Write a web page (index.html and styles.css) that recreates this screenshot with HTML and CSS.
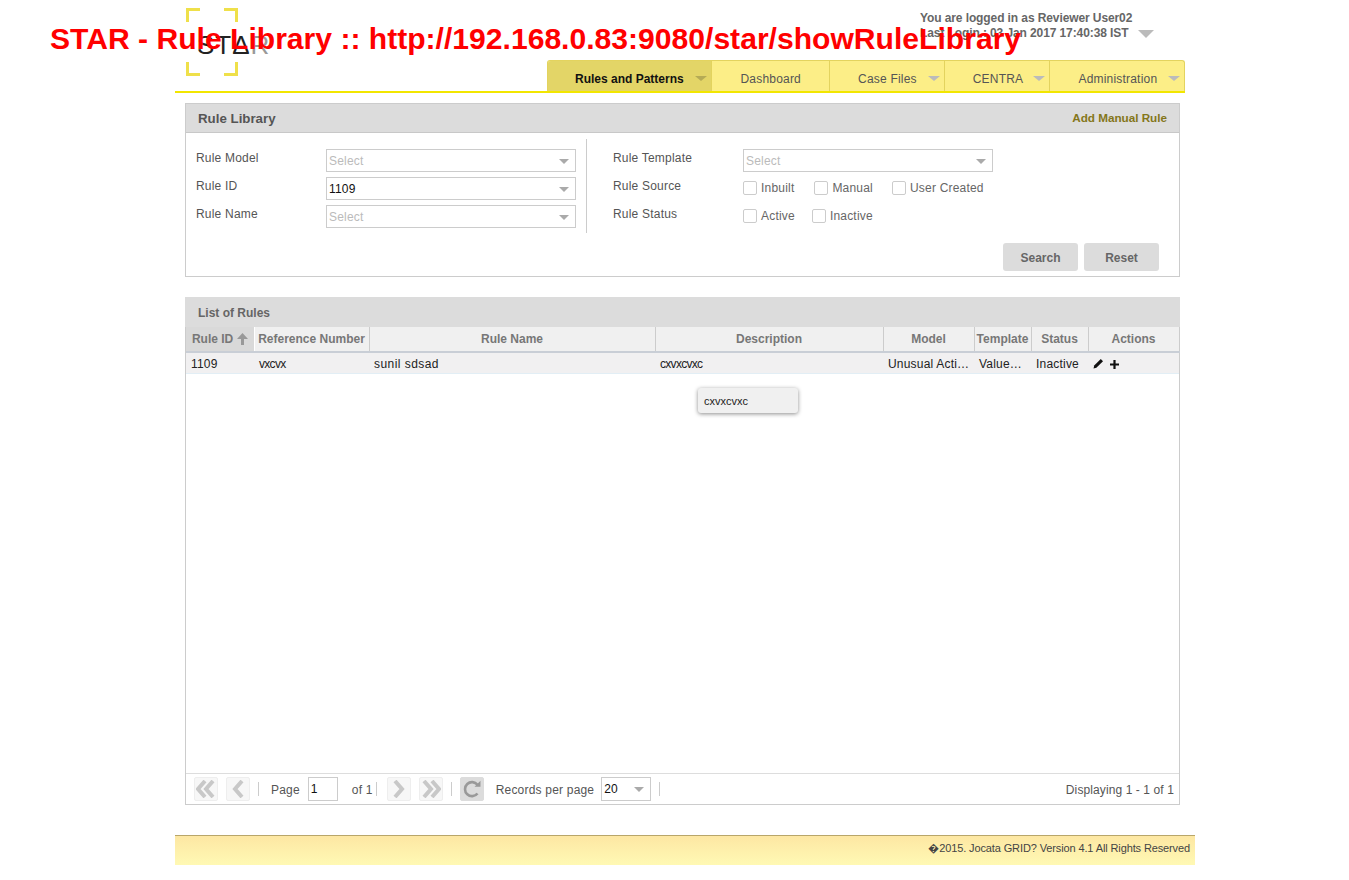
FILE: index.html
```html
<!DOCTYPE html>
<html lang="en">
<head>
    <meta charset="UTF-8">
    <title>STAR - Rule Library</title>
    <link rel="stylesheet" href="styles.css">
</head>
<body>
    <div class="page-title">STAR - Rule Library :: http://192.168.0.83:9080/star/showRuleLibrary</div>

    <div class="wrapper">
        <div class="header">
            <div class="logo">
                <span class="corner tl"></span><span class="corner tr"></span>
                <span class="corner bl"></span><span class="corner br"></span>
                <span class="logo-text">STΔ<span class="logo-r">R</span></span>
            </div>
            <div class="user-info">
                <div>You are logged in as Reviewer User02</div>
                <div>Last Login : 03 Jan 2017 17:40:38 IST <span class="user-arrow"></span></div>
            </div>
            <ul class="nav">
                <li class="nav-item active" style="width:165px">Rules and Patterns<span class="nav-arrow"></span></li>
                <li class="nav-item" style="width:118px">Dashboard</li>
                <li class="nav-item" style="width:115px">Case Files<span class="nav-arrow"></span></li>
                <li class="nav-item" style="width:106px">CENTRA<span class="nav-arrow"></span></li>
                <li class="nav-item" style="width:134px">Administration<span class="nav-arrow"></span></li>
            </ul>
        </div>

        <div class="panel search-panel">
            <div class="panel-head">
                <span class="panel-title">Rule Library</span>
                <a class="add-link">Add Manual Rule</a>
            </div>
            <div class="search-body">
                <div class="search-left">
                    <div class="form-row">
                        <label>Rule Model</label>
                        <div class="select"><span class="placeholder">Select</span><span class="select-arrow"></span></div>
                    </div>
                    <div class="form-row">
                        <label>Rule ID</label>
                        <div class="select"><span>1109</span><span class="select-arrow"></span></div>
                    </div>
                    <div class="form-row">
                        <label>Rule Name</label>
                        <div class="select"><span class="placeholder">Select</span><span class="select-arrow"></span></div>
                    </div>
                </div>
                <div class="search-right">
                    <div class="form-row">
                        <label>Rule Template</label>
                        <div class="select"><span class="placeholder">Select</span><span class="select-arrow"></span></div>
                    </div>
                    <div class="form-row">
                        <label>Rule Source</label>
                        <div class="checks">
                            <span class="check check-a"><i></i>Inbuilt</span>
                            <span class="check check-b"><i></i>Manual</span>
                            <span class="check"><i></i>User Created</span>
                        </div>
                    </div>
                    <div class="form-row">
                        <label>Rule Status</label>
                        <div class="checks">
                            <span class="check check-c"><i></i>Active</span>
                            <span class="check"><i></i>Inactive</span>
                        </div>
                    </div>
                </div>
            </div>
            <div class="search-actions">
                <button>Search</button>
                <button>Reset</button>
            </div>
        </div>

        <div class="panel list-panel">
            <div class="list-head">List of Rules</div>
            <table class="grid">
                <colgroup>
                    <col style="width:68px"><col style="width:115px"><col style="width:286px"><col style="width:228px">
                    <col style="width:91px"><col style="width:57px"><col style="width:57px"><col style="width:91px">
                </colgroup>
                <thead>
                    <tr>
                        <th class="sorted">Rule ID
                            <svg class="sort-icon" width="11" height="12" viewBox="0 0 11 12"><path d="M5.5 0 L11 6 H7 V12 H4 V6 H0 Z" fill="#999"/></svg>
                        </th>
                        <th>Reference Number</th>
                        <th>Rule Name</th>
                        <th>Description</th>
                        <th>Model</th>
                        <th>Template</th>
                        <th>Status</th>
                        <th>Actions</th>
                    </tr>
                </thead>
                <tbody>
                    <tr>
                        <td>1109</td>
                        <td class="tight">vxcvx</td>
                        <td class="wide">sunil sdsad</td>
                        <td class="tight">cxvxcvxc</td>
                        <td>Unusual Activity</td>
                        <td>Values Rule</td>
                        <td>Inactive</td>
                        <td class="actions">
                            <svg width="11" height="11" viewBox="0 0 11 11"><path d="M0.5 10.5 L1.2 7.6 L7.8 1 L10 3.2 L3.4 9.8 Z" fill="#111"/></svg>
                            <svg width="9" height="9" viewBox="0 0 9 9"><path d="M3.4 0 H5.6 V3.4 H9 V5.6 H5.6 V9 H3.4 V5.6 H0 V3.4 H3.4 Z" fill="#111"/></svg>
                        </td>
                    </tr>
                </tbody>
            </table>
            <div class="grid-space">
                <div class="tooltip">cxvxcvxc</div>
            </div>
            <div class="pager">
                <span class="pg-btn"><svg width="20" height="18" viewBox="0 0 20 18"><path d="M9 1 L2 9 L9 17 M17 1 L10 9 L17 17" fill="none" stroke="#c8c8c8" stroke-width="4"/></svg></span>
                <span class="pg-btn"><svg width="12" height="18" viewBox="0 0 12 18"><path d="M10 1 L3 9 L10 17" fill="none" stroke="#c8c8c8" stroke-width="4"/></svg></span>
                <span class="pg-sep"></span>
                <span class="pg-text">Page</span>
                <span class="pg-input">1</span>
                <span class="pg-text pg-of">of 1</span>
                <span class="pg-sep sep-tight"></span>
                <span class="pg-btn"><svg width="12" height="18" viewBox="0 0 12 18"><path d="M2 1 L9 9 L2 17" fill="none" stroke="#c8c8c8" stroke-width="4"/></svg></span>
                <span class="pg-btn"><svg width="20" height="18" viewBox="0 0 20 18"><path d="M3 1 L10 9 L3 17 M11 1 L18 9 L11 17" fill="none" stroke="#c8c8c8" stroke-width="4"/></svg></span>
                <span class="pg-sep sep-refresh"></span>
                <span class="pg-btn refresh"><svg width="18" height="18" viewBox="0 0 18 18"><path d="M14.5 13.5 A7 7 0 1 1 14.5 4.8" fill="none" stroke="#999" stroke-width="2.6"/><path d="M11.5 6.8 H17.5 V0.8 Z" fill="#999"/></svg></span>
                <span class="pg-text pg-records">Records per page</span>
                <div class="select pg-select"><span>20</span><span class="select-arrow"></span></div>
                <span class="pg-sep"></span>
                <span class="pg-display">Displaying 1 - 1 of 1</span>
            </div>
        </div>
    </div>

    <div class="footer">�2015. Jocata GRID? Version 4.1 All Rights Reserved</div>
</body>
</html>
```

FILE: styles.css
```css
* {
    box-sizing: border-box;
}
body {
    margin: 0;
    padding-left: 175px;
    font-family: "Liberation Sans", Arial, sans-serif;
    font-size: 12px;
    letter-spacing: 0.2px;
    color: #444;
    background-color: #fff;
}
.page-title {
    position: absolute;
    left: 50px;
    top: 20px;
    font-size: 30.1px;
    line-height: 37px;
    font-weight: bold;
    letter-spacing: 0;
    color: #f00;
    white-space: nowrap;
    z-index: 10;
}
.wrapper {
    width: 1010px;
}

/* Header */
.header {
    position: relative;
    height: 93px;
    border-bottom: 2px solid #f2e600;
    display: flex;
    align-items: flex-end;
    justify-content: flex-end;
}
.logo {
    position: absolute;
    left: 11px;
    top: 8px;
    width: 52px;
    height: 68px;
}
.corner {
    position: absolute;
    width: 14px;
    height: 14px;
    border: 0 solid #efe04a;
}
.tl { left: 0; top: 0; border-width: 3px 0 0 3px; }
.tr { right: 0; top: 0; border-width: 3px 3px 0 0; }
.bl { left: 0; bottom: 0; border-width: 0 0 3px 3px; }
.br { right: 0; bottom: 0; border-width: 0 3px 3px 0; }
.logo-text {
    position: absolute;
    left: 11px;
    top: 22px;
    font-size: 26px;
    line-height: 30px;
    color: #222;
    letter-spacing: 1px;
    white-space: nowrap;
}
.logo-r {
    color: #999;
}
.user-info {
    position: absolute;
    left: 745px;
    top: 11px;
    font-size: 12px;
    line-height: 15px;
    font-weight: bold;
    letter-spacing: -0.1px;
    color: #666;
    white-space: nowrap;
}
.user-arrow {
    display: inline-block;
    margin-left: 6px;
    border-left: 8px solid transparent;
    border-right: 8px solid transparent;
    border-top: 8px solid #bbb;
    vertical-align: -1px;
}
.nav {
    display: flex;
    list-style: none;
    margin: 0;
    padding: 0;
    height: 31px;
    background-color: #fcee87;
    border: 1px solid #e3d35e;
    border-bottom: 0;
    border-radius: 3px 3px 0 0;
    width: 638px;
}
.nav-item {
    position: relative;
    font-size: 12px;
    line-height: 36px;
    color: #555;
    padding-left: 28px;
    border-right: 1px solid #e3d35e;
}
.nav-item:last-child {
    border-right: 0;
}
.nav-item.active {
    background-color: #e3d567;
    padding-left: 27px;
    font-weight: bold;
    letter-spacing: 0;
    color: #111;
    border-radius: 3px 0 0 0;
}
.nav-arrow {
    position: absolute;
    right: 4px;
    top: 15px;
    border-left: 6px solid transparent;
    border-right: 6px solid transparent;
    border-top: 5px solid #bbb;
}
.nav-item.active .nav-arrow {
    border-top-color: #b5ab55;
}

/* Panels */
.panel {
    width: 995px;
    margin-left: 10px;
    border: 1px solid #ccc;
    background-color: #fff;
}
.search-panel {
    height: 174px;
    margin-top: 10px;
}
.panel-head {
    height: 29px;
    background-color: #dcdcdc;
    border-bottom: 1px solid #c8c8c8;
    display: flex;
    align-items: center;
    justify-content: space-between;
    padding: 0 12px;
}
.panel-title {
    font-size: 13.3px;
    font-weight: bold;
    letter-spacing: 0;
    color: #555;
}
.add-link {
    padding-bottom: 2px;
    font-size: 11.7px;
    font-weight: bold;
    letter-spacing: 0;
    color: #84761a;
}
.search-body {
    display: flex;
    margin-top: 6px;
}
.search-left {
    width: 401px;
    height: 94px;
    padding: 10px 0 0 10px;
    border-right: 1px solid #ccc;
}
.search-right {
    padding: 10px 0 0 26px;
}
.form-row {
    display: flex;
    height: 23px;
    margin-bottom: 5px;
}
.form-row label {
    display: block;
    width: 130px;
    line-height: 19px;
    color: #555;
}
.select {
    position: relative;
    width: 250px;
    height: 23px;
    border: 1px solid #ccc;
    line-height: 23px;
    padding-left: 2px;
    color: #111;
}
.placeholder {
    color: #bbb;
}
.select-arrow {
    position: absolute;
    right: 6px;
    top: 9px;
    border-left: 5px solid transparent;
    border-right: 5px solid transparent;
    border-top: 5px solid #aaa;
}
.checks {
    display: flex;
    padding-top: 4px;
}
.check {
    display: flex;
    align-items: center;
    height: 14px;
    color: #666;
}
.check i {
    display: block;
    width: 14px;
    height: 14px;
    margin-right: 4px;
    border: 1px solid #ccc;
    border-radius: 2px;
}
.check-a { margin-right: 20px; }
.check-b { margin-right: 19px; }
.check-c { margin-right: 17px; }
.search-actions {
    display: flex;
    justify-content: flex-end;
    gap: 6px;
    margin-top: 10px;
    padding-right: 20px;
}
.search-actions button {
    width: 75px;
    height: 28px;
    padding-top: 2px;
    border: 0;
    border-radius: 3px;
    background-color: #dcdcdc;
    font-family: inherit;
    font-size: 12px;
    font-weight: bold;
    color: #666;
}

/* Grid */
.list-panel {
    height: 508px;
    margin-top: 20px;
    border-top: 0;
    display: flex;
    flex-direction: column;
}
.list-head {
    height: 30px;
    margin: 0 -1px;
    padding-left: 13px;
    background-color: #dcdcdc;
    font-weight: bold;
    letter-spacing: 0;
    line-height: 33px;
    color: #666;
}
.grid {
    width: 100%;
    table-layout: fixed;
    border-collapse: collapse;
}
.grid th {
    height: 25px;
    padding: 0 2px;
    background-color: #f0f0f0;
    border-right: 1px solid #ccc;
    border-bottom: 2px solid #c9ced6;
    font-size: 12px;
    font-weight: bold;
    letter-spacing: 0;
    color: #777;
    text-align: center;
    white-space: nowrap;
}
.grid th.sorted {
    background-color: #d9d9d9;
    border-right: 1px solid #fff;
}
.sort-icon {
    vertical-align: -2px;
}
.grid td {
    height: 21px;
    padding: 2px 4px 0 5px;
    background-color: #f1f0f1;
    border-bottom: 1px solid #e2eef5;
    color: #222;
    white-space: nowrap;
    overflow: hidden;
    text-overflow: ellipsis;
}
.grid td.tight {
    letter-spacing: -0.7px;
}
.grid td.wide {
    letter-spacing: 0.45px;
}
.actions svg {
    margin-right: 2px;
    vertical-align: -1px;
}
.grid-space {
    position: relative;
    flex: 1;
}
.tooltip {
    position: absolute;
    left: 512px;
    top: 14px;
    width: 100px;
    height: 25px;
    padding-left: 6px;
    line-height: 26px;
    font-size: 11px;
    letter-spacing: 0;
    color: #222;
    background-color: #f0f0f0;
    border-radius: 3px;
    box-shadow: 0 1px 4px rgba(0, 0, 0, 0.45);
}
.pager {
    display: flex;
    align-items: center;
    height: 31px;
    padding: 0 5px 0 8px;
    border-top: 1px solid #ddd;
}
.pg-btn {
    display: flex;
    align-items: center;
    justify-content: center;
    width: 24px;
    height: 24px;
    margin-right: 8px;
    background-color: #f7f7f7;
    border: 1px solid #eee;
    border-radius: 2px;
}
.pg-btn.refresh {
    margin-right: 0;
    background-color: #dcdcdc;
    border-color: #dcdcdc;
}
.pg-sep {
    width: 1px;
    height: 14px;
    margin: 0 12px 0 0;
    background-color: #ccc;
}
.pg-sep.sep-tight {
    margin: 0 10px 0 3px;
}
.pg-sep.sep-refresh {
    margin-right: 8px;
}
.pg-text {
    padding-top: 1px;
    color: #555;
}
.pg-input {
    width: 30px;
    height: 24px;
    margin: 0 14px 0 8px;
    padding-left: 2px;
    border: 1px solid #ccc;
    line-height: 22px;
    color: #111;
}
.pg-records {
    margin: 0 7px 0 12px;
}
.pg-select {
    width: 50px;
    height: 24px;
    margin-right: 8px;
}
.pg-display {
    margin-left: auto;
    padding-top: 1px;
    letter-spacing: 0.1px;
    color: #555;
}

/* Footer */
.footer {
    width: 1020px;
    height: 30px;
    margin-top: 30px;
    padding-right: 5px;
    border-top: 1px solid #b8a66a;
    background: linear-gradient(#fde7a3, #fff9b4);
    font-size: 11px;
    letter-spacing: -0.12px;
    line-height: 25px;
    text-align: right;
    color: #444;
}
```
